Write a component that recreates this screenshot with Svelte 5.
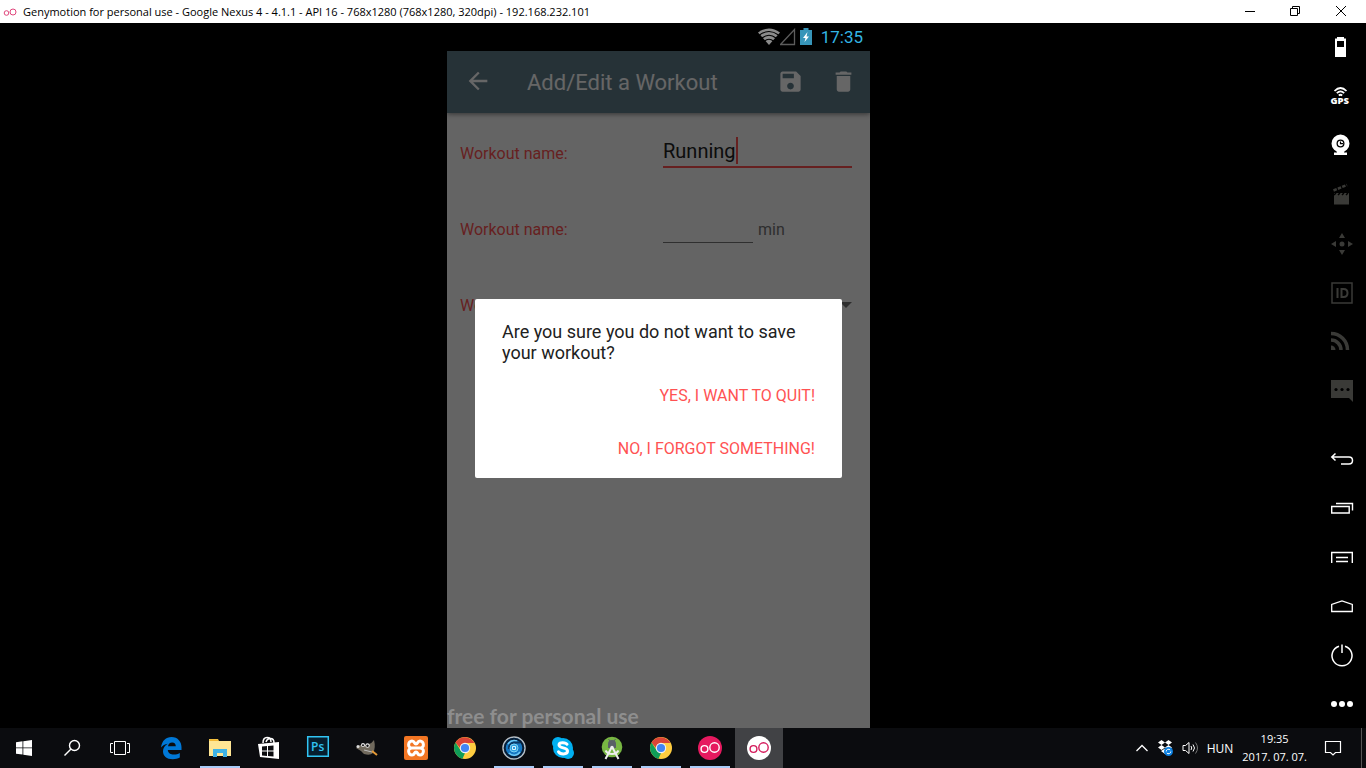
<script>
  let name = $state('Running');
  let minutes = $state('');

  const topTools = ['battery', 'gps', 'camera', 'clapper', 'move', 'id', 'feed', 'chat'];
  const bottomTools = ['back', 'recent', 'menu', 'home', 'power', 'more'];
  const dim = ['clapper', 'move', 'id', 'feed', 'chat'];

  const pinned = [
    { id: 'edge' },
    { id: 'folder', open: true },
    { id: 'store' },
    { id: 'photoshop' },
    { id: 'gimp' },
    { id: 'xampp' },
    { id: 'chrome' },
    { id: 'lens', open: true },
    { id: 'skype', open: true },
    { id: 'studio', open: true },
    { id: 'chrome', open: true },
    { id: 'geny', open: true },
    { id: 'genyplayer', active: true }
  ];
</script>

{#snippet tool(id)}
  <svg width="26" height="26" viewBox="0 0 26 26" fill="none" stroke="none">
    {#if id === 'battery'}
      <path fill="currentColor" fill-rule="evenodd" d="M8 2h7v1.500h2V22H6V3.500h2zM8 6v6h7V6z" />
    {:else if id === 'gps'}
      <g stroke="currentColor" stroke-width="1.700">
        <path d="M5.500 7Q11.500 1 17.500 7M7.800 9.200Q11.500 5.500 15.200 9.200M9.800 11.500Q11.500 10 13.200 11.500" />
      </g>
      <text x="1.500" y="20" font-size="9.500" font-weight="800" fill="currentColor" class="glyph">GPS</text>
    {:else if id === 'camera'}
      <circle cx="11.500" cy="10.500" r="6.500" stroke="currentColor" stroke-width="5" />
      <circle cx="11.500" cy="10.500" r="2.700" fill="currentColor" />
      <path d="M11.500 8.500v2.200H14" stroke="#000" stroke-width="1.200" />
      <path fill="currentColor" d="M7.500 17h8l-.500 2.500H18V22H5v-2.500h3z" />
    {:else if id === 'clapper'}
      <path fill="currentColor" d="M5 11h15v11.500H5z" />
      <path stroke="currentColor" stroke-width="2.500" d="M4.500 8.500 18 3" stroke-dasharray="3.500 1.200" />
      <path stroke="#000" stroke-width="1.500" d="m5 13 2-2M9 13l2-2M13 13l2-2M17 13l2-2" />
    {:else if id === 'move'}
      <circle cx="13" cy="13" r="2.500" fill="currentColor" />
      <path fill="currentColor" d="m13 2 3 5h-6zM13 24l3-5h-6zM2 13l5-3v6zM24 13l-5-3v6z" />
    {:else if id === 'id'}
      <path stroke="currentColor" stroke-width="1.500" d="M3 3h20v20H3z" />
      <path stroke="currentColor" stroke-width="2" d="M8.500 8v10M12.500 9h2q4 0 4 4t-4 4h-2z" />
    {:else if id === 'feed'}
      <g stroke="currentColor" stroke-width="3.500">
        <path d="M2 4.500A16.500 16.500 0 0 1 18.500 21M2 11A10 10 0 0 1 12 21" />
      </g>
      <path fill="currentColor" d="M2 16.500A4.500 4.500 0 0 1 6.500 21H2z" />
    {:else if id === 'chat'}
      <path fill="currentColor" d="M2 2h22v22l-4-4H2z" />
      <g fill="#000"><circle cx="7" cy="11.500" r="1.600" /><circle cx="13" cy="11.500" r="1.600" /><circle cx="19" cy="11.500" r="1.600" /></g>
    {:else if id === 'back'}
      <path stroke="currentColor" stroke-width="1.500" d="M6.500 7.500 2.800 11l3.700 3.500M3 11h17q3.500 0 3.500 3.500T20 18h-8" />
    {:else if id === 'recent'}
      <path stroke="currentColor" stroke-width="1.400" d="M2.700 11.500h17.500V18H2.700zM7 8.500h16.500v7" />
    {:else if id === 'menu'}
      <path stroke="currentColor" stroke-width="1.400" d="M2.700 19V8.500h20.600V19M7 13.500h12M7 17.500h12" />
    {:else if id === 'home'}
      <path stroke="currentColor" stroke-width="1.300" d="M2.700 18.500v-7L13 8l10.300 3.500v7z" />
    {:else if id === 'power'}
      <path stroke="currentColor" stroke-width="1.500" d="M10 4.200a10 10 0 1 0 6 0M13 2.500V11" />
    {:else}
      <g fill="currentColor"><circle cx="5" cy="13" r="3" /><circle cx="13" cy="13" r="3" /><circle cx="21" cy="13" r="3" /></g>
    {/if}
  </svg>
{/snippet}

{#snippet app(id)}
  <svg width="26" height="26" viewBox="0 0 26 26" fill="none">
    {#if id === 'edge'}
      <path fill="#0078d7" d="M3 12.500C4 5.500 8 2 13.500 2 20 2 23.500 7 23.500 12v3H9.800c.3 3.300 3 4.600 6 4.600 2.400 0 4.300-.6 6-1.700v4.700c-2 1.200-4.300 1.700-7 1.700C8.500 24.300 5 21 5 16.300c0-3.300 1.800-6 4.700-7.600C7 9 4.500 10.500 3 12.500zM10 11.200h7.800c0-2.300-1.200-3.800-3.700-3.800-2.300 0-3.700 1.500-4.100 3.800z" />
    {:else if id === 'folder'}
      <path fill="#f5c94b" d="M2 4h9l1 2h12v4H2z" />
      <path fill="#ffe694" d="M2 6h22v15H2z" />
      <path fill="#f2b632" d="M3 4.500h8v1.500H3z" />
      <path fill="#3fb3e6" d="M6 14h14v8h-4v-4h-6v4H6z" />
    {:else if id === 'store'}
      <path stroke="#fff" stroke-width="1.500" d="M7 8q0-5.500 4-5.500T15 7M10 7q1-3.500 4.500-3.500T18 8" />
      <path fill="#fff" d="m2 9 21-2v17L4 22z" />
      <path fill="#0b0c0f" d="M6 11.500l5-.5v4.500H6zM12 11l5.500-.5v5H12zM6 16.500h5V21l-5-.5zM12 16.500h5.500V21.500L12 21z" />
    {:else if id === 'photoshop'}
      <path fill="#061e2e" stroke="#31c5f4" stroke-width="1.500" d="M2.700 1.700h20.600v19.600H2.700z" />
      <text x="6" y="16" font-size="12" font-weight="600" fill="#31c5f4" class="glyph">Ps</text>
    {:else if id === 'gimp'}
      <path fill="#70695c" d="M6 10q4 1 9-1 3-1 5-4 2 8-1 13-3 3-9 1l-3-3-5-3z" />
      <circle cx="4" cy="11.500" r="1.500" fill="#ddd" /><circle cx="9" cy="10" r="2" fill="#eee" /><circle cx="13.500" cy="10.500" r="2.200" fill="#eee" />
      <circle cx="9" cy="10.300" r="1" fill="#111" /><circle cx="13.500" cy="10.800" r="1.200" fill="#111" />
      <path stroke="#bbb" d="m10 15 8 2" /><path stroke="#e59a35" stroke-width="2" d="m18 16 5 4" />
    {:else if id === 'xampp'}
      <rect x="1" y="1" width="24" height="24" rx="2" fill="#f37623" />
      <path stroke="#fff" stroke-width="3" stroke-linejoin="round" d="M13 13H9c-5 0-4-7 0-7 3 0 2 3 4 3s1-3 4-3c4 0 5 7 0 7h-4zm0 0H9c-5 0-4 7 0 7 3 0 2-3 4-3s1 3 4 3c4 0 5-7 0-7z" />
    {:else if id === 'chrome'}
      <circle cx="13" cy="13" r="11" fill="#ffcd40" />
      <path fill="#db4437" d="M13 13h-5L3.500 7.500A11 11 0 0 1 22.500 8H13z" />
      <path fill="#0f9d58" d="M3.500 7.500 8.700 15.500 13 18l-2.500 5.700A11 11 0 0 1 3.500 7.500z" />
      <circle cx="13" cy="13" r="5.200" fill="#f1f1f1" /><circle cx="13" cy="13" r="4.100" fill="#4285f4" />
    {:else if id === 'lens'}
      <circle cx="13" cy="13" r="11" fill="#1677c2" stroke="#b7bec4" stroke-width="1.500" />
      <circle cx="13" cy="13" r="9.300" stroke="#071d35" stroke-width="2" />
      <path stroke="#6cc8f5" stroke-width="1.500" d="M7 9a8 8 0 0 1 9-3M19 17a7 7 0 0 1-11 1" />
      <path stroke="#0a3965" stroke-width="2" d="M8 14a5.500 5.500 0 0 1 5-6.500h6" />
      <circle cx="13" cy="13" r="4" fill="#2c9fe0" stroke="#7bd2f5" /><path stroke="#d9f3ff" d="M11.500 11.500h3v3h-3z" />
    {:else if id === 'skype'}
      <circle cx="13" cy="13" r="10" fill="#00aff0" /><circle cx="8" cy="8" r="6" fill="#00aff0" /><circle cx="18" cy="18" r="6" fill="#00aff0" />
      <path stroke="#fff" stroke-width="3" stroke-linecap="round" d="M17 9.300C16 7.500 9 6.500 9 10c0 3.600 8.500 2.200 8.500 6 0 4-7.500 3.500-9 .800" />
    {:else if id === 'studio'}
      <circle cx="13" cy="12" r="10.300" fill="#78b743" />
      <path fill="#596066" d="M9 9a4 4 0 0 1 8 0v4H9z" /><path stroke="#596066" d="m9.500 4 1.500 2M16.500 4 15 6" />
      <path stroke="#eee" stroke-width="2" d="M12.300 13 6.500 24M13.700 13l5.800 11M6.500 15.500q2 3.500 6.500 3.500t6.500-3.500" /><circle cx="13" cy="12.500" r="1.700" fill="#eee" />
    {:else}
      <circle cx="13" cy="13" r="12" fill={id === 'geny' ? '#e6195f' : '#fff'} />
      <g stroke={id === 'geny' ? '#fff' : '#d51c5c'} stroke-width="1.400"><circle cx="7.500" cy="14" r="3.400" /><circle cx="17.500" cy="12.500" r="4.700" /></g>
    {/if}
  </svg>
{/snippet}

<div class="screen">
  <header class="titlebar">
    <svg width="14" height="12" viewBox="0 0 14 12" fill="none" stroke="#e0457b"><circle cx="3.500" cy="7" r="2.300" /><circle cx="10" cy="6" r="3" /></svg>
    <span class="caption">Genymotion for personal use - Google Nexus 4 - 4.1.1 - API 16 - 768x1280 (768x1280, 320dpi) - 192.168.232.101</span>
    <button aria-label="Minimize"><svg width="12" height="12" viewBox="0 0 12 12" stroke="#000"><path d="M2 5.500h10" /></svg></button>
    <button aria-label="Restore"><svg width="12" height="12" viewBox="0 0 12 12" fill="none" stroke="#000"><path d="M1.500 2.500h7v7h-7zM3.500 2.500v-2h7v7h-2" /></svg></button>
    <button aria-label="Close"><svg width="12" height="12" viewBox="0 0 12 12" stroke="#000"><path d="m1 0 10 10M11 0 1 10" /></svg></button>
  </header>

  <main class="emulator">
    <div class="stage">
      <section class="phone">
        <div class="status">
          <svg width="22" height="18" viewBox="0 0 22 18">
            <path fill="#8b8b8b" d="M0 4.500Q11-3.500 22 4.500L11 17z" />
            <path fill="none" stroke="#000" stroke-width="1.200" d="M1.500 7Q11 0 20.500 7M4 10q7-5.500 14 0M6.500 13q4.500-3.500 9 0" />
          </svg>
          <svg width="16" height="18" viewBox="0 0 16 18" fill="none" stroke="#5c5c5c" stroke-width="1.300"><path d="M.500 16.500 14.500 1.500v15z" /></svg>
          <svg class="cell" width="12" height="18" viewBox="0 0 12 18"><path fill="#3795b9" d="M3.500 0h5v2H12v15H0V2h3.500z" /><path fill="#fff" d="M7.500 4 3 10h2.500L4.500 14 9 8.500H6.500z" /></svg>
          <time>17:35</time>
        </div>

        <div class="app">
          <header class="appbar">
            <button aria-label="Navigate up"><svg width="28" height="28" viewBox="0 0 24 24" fill="#fff"><path d="M20 11H7.830l5.590-5.590L12 4l-8 8 8 8 1.410-1.410L7.830 13H20v-2z" /></svg></button>
            <h1>Add/Edit a Workout</h1>
            <button aria-label="Save"><svg width="27" height="27" viewBox="0 0 24 24" fill="#fff"><path d="M17 3H5c-1.110 0-2 .9-2 2v14c0 1.100.890 2 2 2h14c1.100 0 2-.9 2-2V7l-4-4zm-5 16c-1.660 0-3-1.340-3-3s1.340-3 3-3 3 1.340 3 3-1.340 3-3 3zm3-10H5V5h10v4z" /></svg></button>
            <button aria-label="Delete"><svg width="27" height="27" viewBox="0 0 24 24" fill="#fff"><path d="M6 19c0 1.100.9 2 2 2h8c1.100 0 2-.9 2-2V7H6v12zM19 4h-3.500l-1-1h-5l-1 1H5v2h14V4z" /></svg></button>
          </header>

          <form class="fields">
            <div class="row">
              <label for="name">Workout name:</label>
              <div class="box focus"><input id="name" bind:value={name} /><i class="caret"></i></div>
            </div>
            <div class="row">
              <label for="minutes">Workout name:</label>
              <div class="duration">
                <div class="box short"><input id="minutes" bind:value={minutes} /></div>
                <span>min</span>
              </div>
            </div>
            <div class="row">
              <label for="kind">Workout name:</label>
              <div class="picker">
                <select id="kind"><option></option></select>
                <svg width="12" height="6" viewBox="0 0 12 6" fill="#737373"><path d="M0 0h12L6 6z" /></svg>
              </div>
            </div>
          </form>
          <p class="licence">free for personal use</p>

          <div class="scrim">
            <div class="dialog" role="alertdialog" aria-modal="true" aria-labelledby="question">
              <p id="question">Are you sure you do not want to save your workout?</p>
              <button>YES, I WANT TO QUIT!</button>
              <button>NO, I FORGOT SOMETHING!</button>
            </div>
          </div>
        </div>
      </section>
    </div>

    <aside class="tools">
      <div>
        {#each topTools as id}<button class:dim={dim.includes(id)} aria-label={id}>{@render tool(id)}</button>{/each}
      </div>
      <div>
        {#each bottomTools as id}<button aria-label={id}>{@render tool(id)}</button>{/each}
      </div>
    </aside>
  </main>

  <footer class="taskbar">
    <nav class="system">
      <button aria-label="Start"><svg width="16" height="16" viewBox="0 0 16 16" fill="#fff"><path d="m0 2.200 6.500-.9v6.200H0zM7.300 1.200 16 0v7.500H7.300zM0 8.300h6.500v6.300L0 13.700zM7.300 8.300H16V16l-8.700-1.300z" /></svg></button>
      <button aria-label="Search"><svg width="18" height="18" viewBox="0 0 18 18" fill="none" stroke="#fff" stroke-width="1.400"><circle cx="11.500" cy="6.500" r="5" /><path d="M8 10 1.500 16.500" /></svg></button>
      <button aria-label="Task view"><svg width="20" height="16" viewBox="0 0 20 16" fill="none" stroke="#fff"><path d="M4.500 1.500h11v13h-11zM3 3.500H.5v9H3M17 3.500h2.500v9H17" /></svg></button>
    </nav>
    <nav class="apps">
      {#each pinned as item}
        <button class:open={item.open} class:active={item.active} aria-label={item.id}>{@render app(item.id)}</button>
      {/each}
    </nav>
    <div class="tray">
      <svg width="14" height="8" viewBox="0 0 14 8" fill="none" stroke="#fff" stroke-width="1.300"><path d="m1.500 7 5.500-5.500L12.500 7" /></svg>
      <svg width="17" height="16" viewBox="0 0 17 16"><path fill="#fff" d="m4.500 0 3.500 2.500-3.500 2.400L1 2.500zM11.500 0 15 2.500l-3.500 2.400L8 2.500zM4.500 5.100 8 7.500l-3.500 2.400L1 7.500zM11.500 5.100 15 7.500l-3.500 2.400L8 7.500zM4 11l4-2.500 3 3L8 14z" /><circle cx="11.500" cy="11.500" r="4.500" fill="#0b7fe0" /><path fill="none" stroke="#fff" d="M9.200 11.500a2.300 2.300 0 0 1 4-1.500M13.800 11.500a2.300 2.300 0 0 1-4 1.500" /></svg>
      <svg width="17" height="14" viewBox="0 0 17 14" fill="none" stroke="#fff"><path d="M1 4.500h2.500L7 1.500v11L3.500 9.500H1zM9 5q1.500 2 0 4M11 3.500q3 3.500 0 7" /><path stroke="#777" d="M13.500 1.500q4 5.500 0 11" /></svg>
      <span>HUN</span>
      <div class="clock"><time>19:35</time><time>2017. 07. 07.</time></div>
      <svg class="note" width="18" height="18" viewBox="0 0 18 18" fill="none" stroke="#fff" stroke-width="1.200"><path d="M1.500 2.500h15v11h-5L9 16l-2.500-2.500h-5z" /></svg>
      <i class="peek"></i>
    </div>
  </footer>
</div>

<style>
  :global(body) { margin: 0; background: #000; }
  .screen { min-height: 100vh; display: flex; flex-direction: column; font-family: 'Open Sans', sans-serif; }
  button { border: 0; padding: 0; background: none; font: inherit; color: inherit; display: flex; align-items: center; justify-content: center; }
  svg { display: block; flex: none; }
  .glyph { font-family: 'Open Sans', sans-serif; }

  .titlebar { height: 23px; background: #fff; display: flex; align-items: center; padding-left: 3px; }
  .caption { flex: 1; margin-left: 6px; font-size: 11px; line-height: 20px; color: #000; white-space: nowrap; }
  .titlebar button { width: 46px; height: 20px; }
  .titlebar button:last-child { margin-right: 2px; }

  .emulator { flex: 1; display: flex; }
  .stage { flex: 1; display: flex; justify-content: center; }
  .tools { width: 49px; display: flex; flex-direction: column; justify-content: space-between; color: #fff; }
  .tools button { width: 49px; height: 49px; }
  .tools .dim { color: #3a3a37; }

  .phone { width: 423px; display: flex; flex-direction: column; font-family: Roboto, sans-serif; }
  .status { height: 28px; display: flex; align-items: center; justify-content: flex-end; padding-right: 7px; color: #33b5e5; font-size: 17px; }
  .cell { margin: 0 9px 0 4px; }
  .app { flex: 1; position: relative; display: flex; flex-direction: column; background: #fafafa; }
  .appbar { height: 62px; display: flex; align-items: center; padding: 0 13px 0 17px; background: #607d8b; color: #fff; box-shadow: 0 1px 5px rgba(0, 0, 0, .5); }
  .appbar button { width: 28px; height: 28px; margin-bottom: 2px; }
  .appbar button:last-child { margin-left: 25px; }
  h1 { flex: 1; margin: 0 0 0 35px; font-size: 22px; font-weight: 400; }
  .fields { padding: 2px 18px 0 13px; }
  .row { display: grid; grid-template-columns: 203px 1fr; align-items: center; height: 76px; }
  label { font-size: 16px; color: #ff5252; }
  .box { display: flex; height: 27px; border-bottom: 1px solid #757575; }
  .focus { height: 29px; margin-bottom: 2px; border-bottom: 2px solid #ff5252; }
  input { field-sizing: content; min-width: 0; border: 0; padding: 0; outline: 0; background: none; font: 20px Roboto, sans-serif; color: #212121; }
  .caret { width: 2px; height: 27px; background: #ff5252; }
  .duration { display: flex; align-items: center; gap: 5px; font-size: 16px; color: #737373; }
  .short { width: 90px; }
  .picker { display: flex; align-items: center; }
  select { flex: 1; appearance: none; border: 0; background: none; height: 28px; }
  .licence { position: relative; z-index: 1; margin: auto 0 0; font: 700 21px/24px Lato, sans-serif; color: #8e8e8e; }
  .scrim { position: absolute; inset: 0; display: flex; align-items: center; justify-content: center; padding-bottom: 2px; background: rgba(0, 0, 0, .6); }
  .dialog { box-sizing: border-box; width: 367px; padding: 22px 27px 3px 27px; display: flex; flex-direction: column; align-items: flex-end; background: #fff; border-radius: 2px; }
  .dialog p { align-self: stretch; margin: 0 0 6px; font-size: 18px; line-height: 21px; color: #212121; }
  .dialog button { height: 53px; font-size: 16px; color: #ff5252; }

  .taskbar { height: 40px; display: flex; justify-content: space-between; background: #0b0c0f; color: #fff; }
  .system, .apps { display: flex; }
  .apps { flex: 1; gap: 1px; padding-left: 3px; }
  .system button, .apps button { width: 48px; height: 40px; box-sizing: border-box; }
  .apps .open { border: solid transparent; border-width: 2px 0; background: linear-gradient(#a9cbf7, #a9cbf7) center bottom / 40px 2px no-repeat border-box; }
  .apps .active { background: #414245; }
  .tray { display: flex; align-items: center; font-size: 12px; }
  .tray svg + svg { margin-left: 8px; }
  .tray span { margin-left: 8px; }
  .clock { display: flex; flex-direction: column; align-items: center; margin-left: 9px; font-size: 11px; line-height: 18px; }
  .tray .note { margin: 0 19px 0 17px; }
  .peek { align-self: stretch; width: 4px; border-left: 1px solid #555; }
</style>
